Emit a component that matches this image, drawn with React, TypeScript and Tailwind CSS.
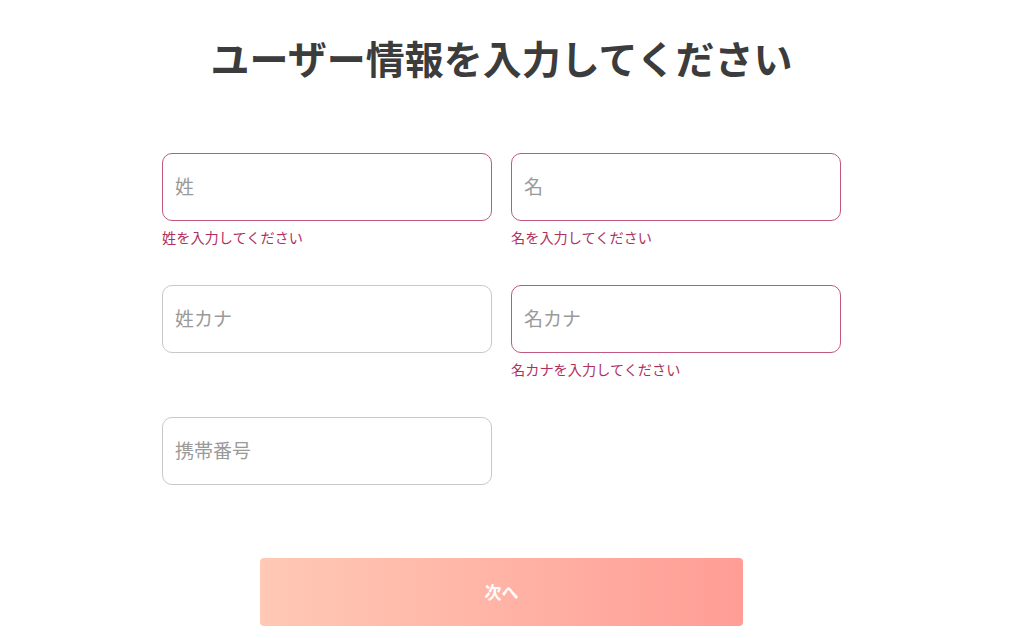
import { useState } from "react";

type Field = { key: string; label: string; error?: string };

const rows: Field[][] = [
  [
    { key: "lastName", label: "姓", error: "姓を入力してください" },
    { key: "firstName", label: "名", error: "名を入力してください" },
  ],
  [
    { key: "lastKana", label: "姓カナ" },
    { key: "firstKana", label: "名カナ", error: "名カナを入力してください" },
  ],
  [{ key: "phone", label: "携帯番号" }],
];

function Input({ field }: { field: Field }) {
  const [value, setValue] = useState("");
  return (
    <div className="flex flex-col w-[330px]">
      <input
        value={value}
        onChange={(e) => setValue(e.target.value)}
        placeholder={field.label}
        className={
          "h-[68px] w-full rounded-[10px] border bg-white px-3 pb-[3px] text-[19px] text-[#333] outline-none placeholder:text-[#9a9a9a] " +
          (field.error ? "border-[#c0587f]" : "border-[#c8c8c8]")
        }
      />
      {field.error && (
        <p className="mt-[7px] text-[14.2px] leading-[18px] text-[#b12f5c]">{field.error}</p>
      )}
    </div>
  );
}

export default function App() {
  return (
    <div
      className="min-h-[638px] bg-white"
      style={{ fontFamily: '"Noto Sans CJK JP", "Noto Sans", sans-serif' }}
    >
      <div className="flex w-[1003px] flex-col items-center pt-[29px]">
        <h1 className="text-[39px] font-bold leading-[56px] text-[#3c3c3c]">
          ユーザー情報を入力してください
        </h1>

        <div className="mt-[68px] flex w-[679px] flex-col">
          {rows.map((row, i) => (
            <div key={i} className="flex h-[132px] items-start gap-[19px]">
              {row.map((f) => (
                <Input key={f.key} field={f} />
              ))}
            </div>
          ))}
        </div>

        <button className="mt-[9px] flex h-[68px] w-[483px] items-center justify-center rounded-[4px] bg-linear-to-r from-[#ffc9b5] to-[#ff9d95] text-[17px] font-bold text-white">
          次へ
        </button>
      </div>
    </div>
  );
}
